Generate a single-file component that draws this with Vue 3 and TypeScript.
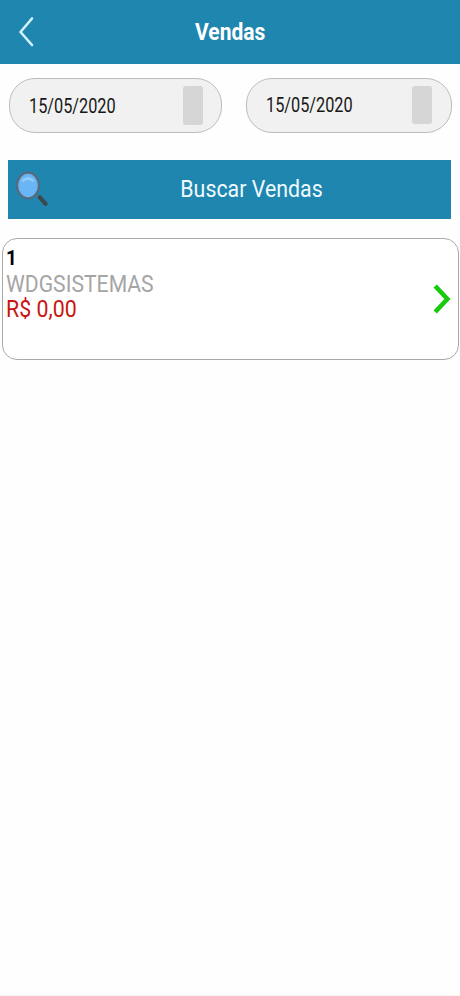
<script setup lang="ts">
interface Sale {
  id: number
  customer: string
  total: string
}

const startDate = '15/05/2020'
const endDate = '15/05/2020'
const sales: Sale[] = [{ id: 1, customer: 'WDGSISTEMAS', total: 'R$ 0,00' }]
</script>

<template>
  <div class="screen">
    <header class="bar">
      <svg class="back" width="18" height="32" viewBox="0 0 18 32" fill="none">
        <path d="M15 2.5 L3.5 16 L15 29" stroke="#d3f2fd" stroke-width="2.6" stroke-linecap="round" stroke-linejoin="round" />
      </svg>
      <h1 class="title"><span>Vendas</span></h1>
    </header>

    <div class="dates">
      <div class="date first"><span class="value">{{ startDate }}</span><i class="picker"></i></div>
      <div class="date second"><span class="value">{{ endDate }}</span><i class="picker"></i></div>
    </div>

    <button class="search" type="button">
      <svg class="lens" width="34" height="40" viewBox="0 0 34 40">
        <path d="M22.5 26.5 L25.5 29.5" stroke="#68747b" stroke-width="3" />
        <path d="M24.8 28.3 L30.6 34.8" stroke="#3d474d" stroke-width="4.2" stroke-linecap="round" />
        <ellipse cx="13" cy="16.5" rx="11" ry="12.8" fill="#69b5f6" stroke="#566b7b" stroke-width="2.2" />
        <path d="M6 12 Q13 4.5 20 12 Q18 13.5 16.5 12.1 Q13 10 9.5 12.3 Q7.5 13.5 6 12Z" fill="#91cdfb" />
      </svg>
      <span class="label">Buscar Vendas</span>
    </button>

    <article v-for="sale in sales" :key="sale.id" class="sale">
      <div class="details">
        <span class="number">{{ sale.id }}</span>
        <span class="customer">{{ sale.customer }}</span>
        <span class="total">{{ sale.total }}</span>
      </div>
      <svg class="go" width="20" height="32" viewBox="0 0 20 32" fill="none">
        <path d="M3.2 3 L15.4 16 L3.2 29" stroke="#19c90b" stroke-width="4.6" />
      </svg>
    </article>
  </div>
</template>

<style>
body {
  margin: 0;
  background: #fefefe;
}
</style>

<style scoped>
.screen {
  box-sizing: border-box;
  width: 460px;
  height: 996px;
  overflow: hidden;
  background: #fefefe;
  border-bottom: 1px solid #f5f5f5;
  font-family: Roboto, "Liberation Sans", sans-serif;
}
.bar {
  display: grid;
  grid-template-columns: 60px 1fr 60px;
  align-items: center;
  height: 64px;
  background: #1f86b0;
}
.back {
  margin-left: 17px;
}
.title {
  margin: 0;
  text-align: center;
  color: #fff;
  font-size: 24px;
  line-height: 28px;
  font-weight: 700;
}
.title span {
  display: inline-block;
  transform: scaleX(0.875);
}
.dates {
  display: flex;
  gap: 24px;
  padding: 14px 8px 0 9px;
}
.date {
  box-sizing: border-box;
  display: flex;
  justify-content: space-between;
  height: 55px;
  border: 1px solid #bdbdbd;
  border-radius: 26px;
  background: #f1f1f1;
}
.first {
  width: 213px;
  padding: 7px 18px 0 19px;
}
.second {
  width: 206px;
  padding: 7px 19px 0 19px;
}
.value {
  color: #181818;
  font-size: 19.5px;
  line-height: 42px;
  transform: scaleX(0.835);
  transform-origin: left;
}
.second .value {
  line-height: 40px;
}
.picker {
  width: 20px;
  height: 39px;
  border-radius: 3px;
  background: #d6d6d6;
}
.second .picker {
  height: 38px;
}
.search {
  display: grid;
  grid-template-columns: 44px 1fr 0;
  align-items: center;
  width: 443px;
  height: 59px;
  margin: 27px 0 0 8px;
  padding: 0 0 2px;
  border: 0;
  background: #1f86b0;
  color: #eefaff;
  font: 400 24px/28px Roboto, "Liberation Sans", sans-serif;
}
.lens {
  margin-left: 7px;
}
.label {
  transform: scaleX(0.89);
}
.sale {
  box-sizing: border-box;
  display: flex;
  justify-content: space-between;
  width: 457px;
  height: 122px;
  margin: 19px 0 0 2px;
  padding: 6px 6px 0 3px;
  border: 1px solid #a9a9a9;
  border-radius: 15px;
  background: #fff;
}
.details {
  display: flex;
  flex-direction: column;
  align-items: flex-start;
}
.details span {
  transform-origin: left;
}
.number {
  color: #000;
  font-size: 21px;
  line-height: 26px;
  font-weight: 700;
  transform: scaleX(0.9);
}
.customer {
  color: #a5a5a5;
  font-size: 24px;
  line-height: 26px;
  transform: scaleX(0.882);
}
.total {
  color: #c91410;
  font-size: 24px;
  line-height: 25px;
  transform: scaleX(0.89);
}
.go {
  margin-top: 38px;
}
</style>
